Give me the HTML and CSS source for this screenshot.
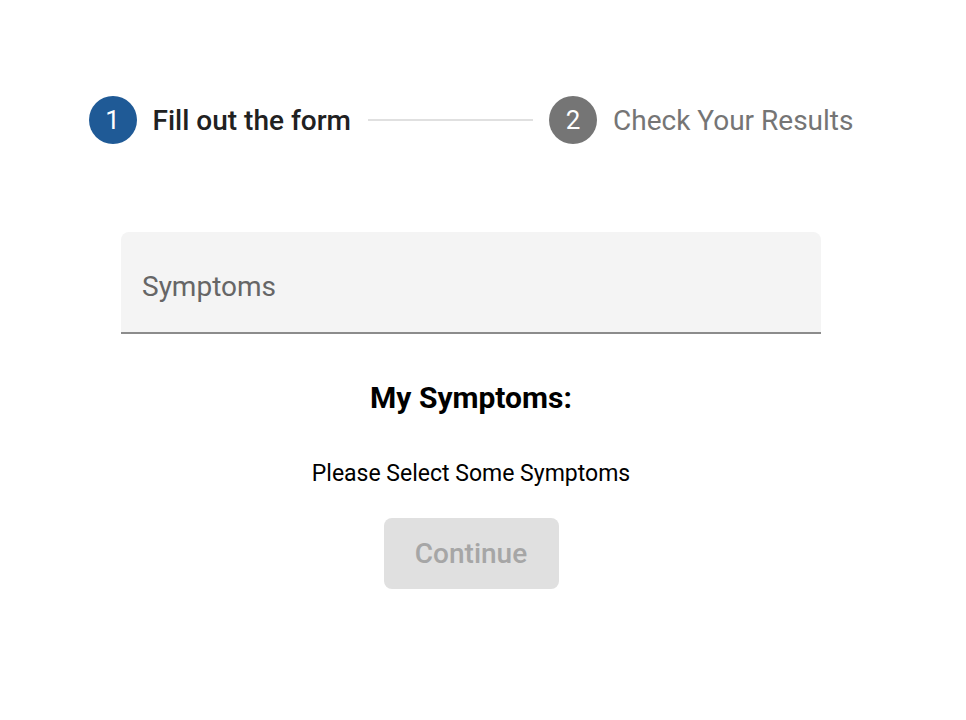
FILE: index.html
```html
<!DOCTYPE html>
<html>
<head>
<meta charset="utf-8">
<link rel="stylesheet" href="styles.css">
</head>
<body>
<div class="page">
  <div class="stepper">
    <div class="step">
      <span class="step-icon active">1</span>
      <span class="step-label active">Fill out the form</span>
    </div>
    <div class="connector"></div>
    <div class="step">
      <span class="step-icon">2</span>
      <span class="step-label">Check Your Results</span>
    </div>
  </div>
  <div class="form">
    <div class="field"><span class="field-label">Symptoms</span></div>
    <h2 class="heading">My Symptoms:</h2>
    <p class="empty">Please Select Some Symptoms</p>
    <button class="continue" disabled>Continue</button>
  </div>
</div>
</body>
</html>
```
FILE: styles.css
```css
html, body { margin: 0; padding: 0; background: #fff; }
body { font-family: Roboto, "Noto Sans", sans-serif; }
.page { width: 942px; }
.stepper {
  display: flex;
  align-items: center;
  justify-content: center;
  padding-top: 96px;
}
.step { display: flex; align-items: center; }
.step-icon {
  width: 48px; height: 48px; border-radius: 50%;
  background: #757575; color: #fff;
  display: flex; align-items: center; justify-content: center;
  font-size: 26px;
}
.step-icon.active { background: #1f5a96; }
.step-label {
  margin-left: 16px;
  font-size: 28px;
  color: #757575;
}
.step-label.active { color: #212121; font-weight: 500; }
.connector {
  width: 165px;
  border-top: 2px solid #e0e0e0;
  margin: 0 16px 0 17px;
}
.form {
  display: flex; flex-direction: column; align-items: center;
  margin-top: 88px;
}
.field {
  width: 700px; height: 102px; box-sizing: border-box;
  background: #f4f4f4;
  border-radius: 8px 8px 0 0;
  border-bottom: 2px solid #8c8c8c;
  display: flex; align-items: center;
  padding-left: 21px;
}
.field-label { font-size: 28px; color: #666; margin-top: 8px; }
.heading {
  margin: 46px 0 0; font-size: 30px; line-height: 36px; font-weight: 700; color: #000;
}
.empty { margin: 44px 0 0; font-size: 23px; line-height: 28px; color: #000; }
.continue {
  margin-top: 30px;
  width: 175px; height: 71px;
  border: none; border-radius: 8px;
  background: #e0e0e0; color: #a6a6a6;
  font-family: Roboto, sans-serif; font-size: 28px; font-weight: 500;
}
```
